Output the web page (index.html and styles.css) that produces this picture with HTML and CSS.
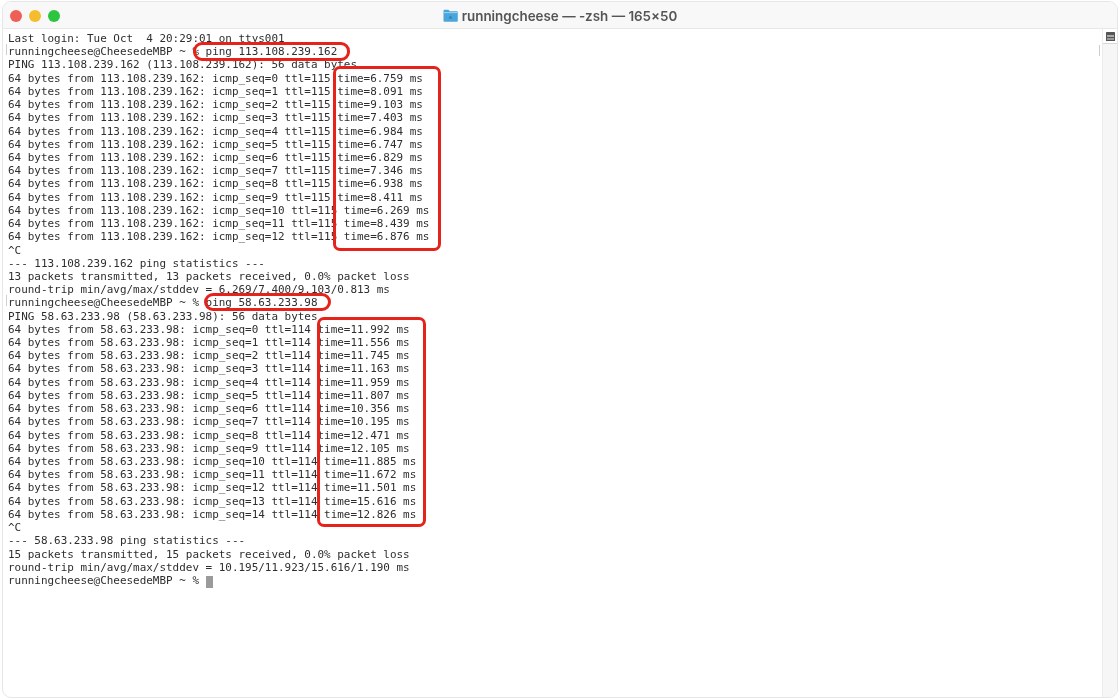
FILE: index.html
```
<!DOCTYPE html>
<html lang="en">
<head>
<meta charset="utf-8">
<title>running cheese terminal</title>
<link rel="stylesheet" href="styles.css">
</head>
<body>
<div class="window">
  <header class="titlebar">
    <div class="lights"><span class="light red"></span><span class="light yellow"></span><span class="light green"></span></div>
    <div class="title">
      <svg class="folder" width="15" height="13" viewBox="0 0 15 13"><path d="M0.5 2c0-.8.5-1.3 1.3-1.3h3.6l1.3 1.5h6.8c.8 0 1.3.5 1.3 1.3v8c0 .8-.5 1.3-1.3 1.3H1.8c-.8 0-1.3-.5-1.3-1.3z" fill="#4aa5da"/><path d="M0.5 3.6h14" stroke="#8fd0f2" stroke-width="1.2"/><path d="M5.5 9.5l2-3 2 3z" fill="#2f7fb5"/></svg>
      <span>runningcheese — -zsh — 165×50</span>
    </div>
  </header>
  <div class="content">
    <main class="terminal">
<pre class="output">Last login: Tue Oct  4 20:29:01 on ttys001
runningcheese@CheesedeMBP ~ % ping 113.108.239.162
PING 113.108.239.162 (113.108.239.162): 56 data bytes
64 bytes from 113.108.239.162: icmp_seq=0 ttl=115 time=6.759 ms
64 bytes from 113.108.239.162: icmp_seq=1 ttl=115 time=8.091 ms
64 bytes from 113.108.239.162: icmp_seq=2 ttl=115 time=9.103 ms
64 bytes from 113.108.239.162: icmp_seq=3 ttl=115 time=7.403 ms
64 bytes from 113.108.239.162: icmp_seq=4 ttl=115 time=6.984 ms
64 bytes from 113.108.239.162: icmp_seq=5 ttl=115 time=6.747 ms
64 bytes from 113.108.239.162: icmp_seq=6 ttl=115 time=6.829 ms
64 bytes from 113.108.239.162: icmp_seq=7 ttl=115 time=7.346 ms
64 bytes from 113.108.239.162: icmp_seq=8 ttl=115 time=6.938 ms
64 bytes from 113.108.239.162: icmp_seq=9 ttl=115 time=8.411 ms
64 bytes from 113.108.239.162: icmp_seq=10 ttl=115 time=6.269 ms
64 bytes from 113.108.239.162: icmp_seq=11 ttl=115 time=8.439 ms
64 bytes from 113.108.239.162: icmp_seq=12 ttl=115 time=6.876 ms
^C
--- 113.108.239.162 ping statistics ---
13 packets transmitted, 13 packets received, 0.0% packet loss
round-trip min/avg/max/stddev = 6.269/7.400/9.103/0.813 ms
runningcheese@CheesedeMBP ~ % ping 58.63.233.98
PING 58.63.233.98 (58.63.233.98): 56 data bytes
64 bytes from 58.63.233.98: icmp_seq=0 ttl=114 time=11.992 ms
64 bytes from 58.63.233.98: icmp_seq=1 ttl=114 time=11.556 ms
64 bytes from 58.63.233.98: icmp_seq=2 ttl=114 time=11.745 ms
64 bytes from 58.63.233.98: icmp_seq=3 ttl=114 time=11.163 ms
64 bytes from 58.63.233.98: icmp_seq=4 ttl=114 time=11.959 ms
64 bytes from 58.63.233.98: icmp_seq=5 ttl=114 time=11.807 ms
64 bytes from 58.63.233.98: icmp_seq=6 ttl=114 time=10.356 ms
64 bytes from 58.63.233.98: icmp_seq=7 ttl=114 time=10.195 ms
64 bytes from 58.63.233.98: icmp_seq=8 ttl=114 time=12.471 ms
64 bytes from 58.63.233.98: icmp_seq=9 ttl=114 time=12.105 ms
64 bytes from 58.63.233.98: icmp_seq=10 ttl=114 time=11.885 ms
64 bytes from 58.63.233.98: icmp_seq=11 ttl=114 time=11.672 ms
64 bytes from 58.63.233.98: icmp_seq=12 ttl=114 time=11.501 ms
64 bytes from 58.63.233.98: icmp_seq=13 ttl=114 time=15.616 ms
64 bytes from 58.63.233.98: icmp_seq=14 ttl=114 time=12.826 ms
^C
--- 58.63.233.98 ping statistics ---
15 packets transmitted, 15 packets received, 0.0% packet loss
round-trip min/avg/max/stddev = 10.195/11.923/15.616/1.190 ms
runningcheese@CheesedeMBP ~ % <span class="cursor"> </span></pre>
      <div class="mark box1"></div>
      <div class="mark box2"></div>
      <div class="mark box3"></div>
      <div class="mark box4"></div>
      <div class="tick tick1"></div>
      <div class="tick tick2"></div>
      <div class="tick tick3"></div>
    </main>
    <aside class="gutter">
      <div class="gutter-btn"><svg width="9" height="9" viewBox="0 0 9 9"><rect width="9" height="9" rx="0.5" fill="#555"/><rect x="1" y="3" width="7" height="2" fill="#aaa"/><rect x="1" y="6" width="7" height="2" fill="#999"/></svg></div>
    </aside>
  </div>
</div>
</body>
</html>
```
FILE: styles.css
```
* { box-sizing: border-box; }
html, body { margin: 0; height: 100%; background: #fff; }
body { padding: 1px 2px 2px 2px; overflow: hidden; }
.window {
  height: 100%;
  display: flex;
  flex-direction: column;
  border: 1px solid #e6e6e6;
  border-radius: 9px;
  overflow: hidden;
  background: #fff;
}
.titlebar {
  flex: 0 0 27px;
  position: relative;
  display: flex;
  align-items: center;
  justify-content: center;
  padding-top: 1px;
  background: #f8f8f8;
  border-bottom: 1px solid #e8e8e8;
}
.lights { position: absolute; left: 7px; top: 8px; display: flex; gap: 7px; }
.light { width: 12px; height: 12px; border-radius: 50%; }
.red { background: #ee5f57; }
.yellow { background: #f5bd2e; }
.green { background: #2bc53f; }
.title {
  display: flex;
  align-items: center;
  gap: 4px;
  font: 600 13.4px "Inter", "Liberation Sans", sans-serif;
  color: #555;
  filter: blur(0.3px);
}
.content { flex: 1; display: flex; min-height: 0; }
.terminal { flex: 1; position: relative; min-width: 0; }
.output {
  margin: 0;
  padding: 3px 0 0 5px;
  font: 10.95px/13.22px "DejaVu Sans Mono", "Liberation Mono", monospace;
  color: #2e2e2e;
  filter: blur(0.4px);
}
.cursor { display: inline-block; width: 7px; height: 12px; background: #9a9a9a; vertical-align: -2px; }
.mark {
  position: absolute;
  border: 3px solid #e5231b;
  border-radius: 7px;
}
.box1 { left: 190px; top: 13px; width: 157px; height: 19px; border-radius: 9px; }
.box2 { left: 330px; top: 37px; width: 108px; height: 185px; }
.box3 { left: 201px; top: 264px; width: 127px; height: 18px; border-radius: 9px; }
.box4 { left: 314px; top: 288px; width: 109px; height: 210px; }
.tick { position: absolute; width: 1px; height: 11px; background: #cfcfcf; }
.tick1 { left: 3px; top: 15px; }
.tick2 { left: 3px; top: 266px; }
.tick3 { right: 2px; top: 16px; }
.gutter { flex: 0 0 15px; background: #f6f6f6; border-left: 1px solid #ececec; }
.gutter-btn {
  height: 15px;
  display: flex;
  align-items: center;
  justify-content: center;
  background: #fff;
  border-bottom: 1px solid #d8d8d8;
}
```
